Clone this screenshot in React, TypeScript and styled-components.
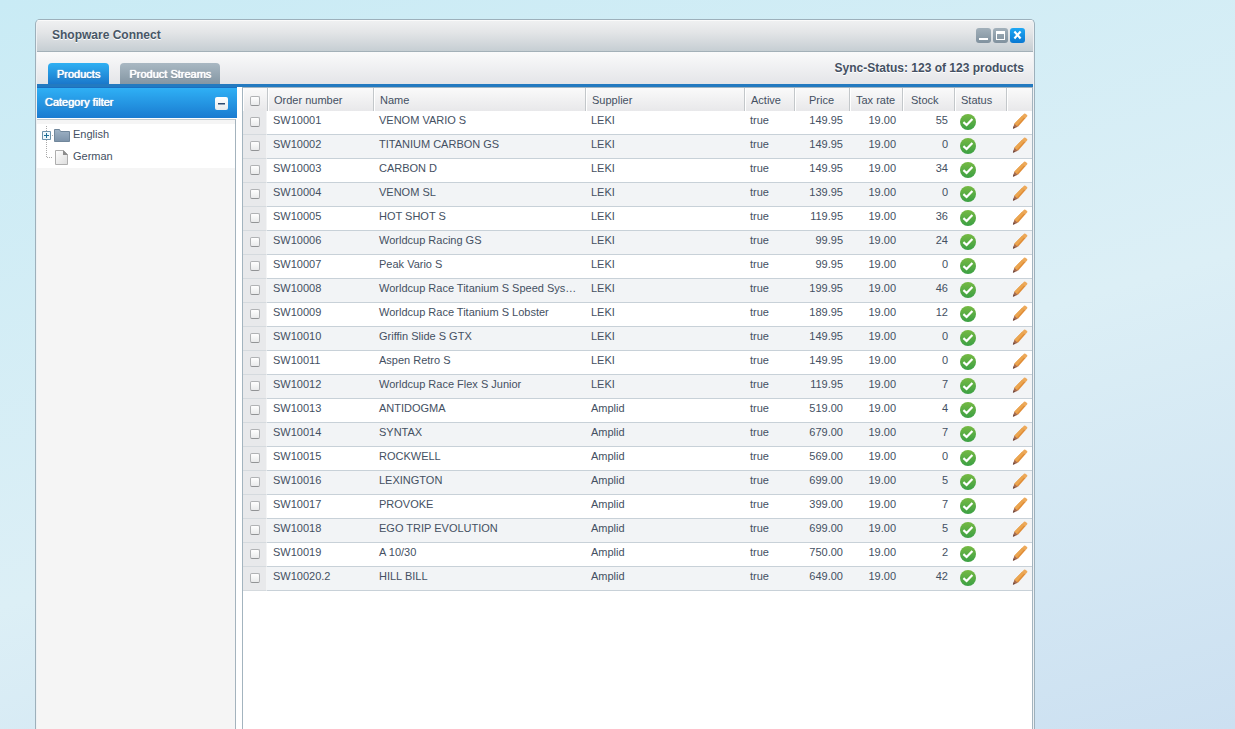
import React from "react";
import styled, { createGlobalStyle, css } from "styled-components";

const GlobalStyle = createGlobalStyle`
  *, *::before, *::after { box-sizing: border-box; }
  html { background: #d3e9f4; }
  body {
    margin: 0;
    font-family: "Liberation Sans", Arial, Helvetica, sans-serif;
    font-size: 11px;
    color: #445062;
  }
`;

const Desktop = styled.div`
  display: flex;
  min-height: 100vh;
  padding: 19px 200px 0 35px;
  background: linear-gradient(164deg, #c9ebf5 0%, #dceff6 56%, #cce0f1 100%);
`;

const Window = styled.main`
  flex: 1;
  min-width: 0;
  display: flex;
  flex-direction: column;
  padding: 0 1px;
  border: 1px solid #9db0bb;
  border-bottom: 0;
  border-radius: 5px 5px 0 0;
  background: #eef1f3;
  overflow: hidden;
`;

const TitleBar = styled.header`
  display: flex;
  align-items: center;
  justify-content: space-between;
  height: 32px;
  padding: 0 8px 0 15px;
  border-bottom: 1px solid #a3b0b8;
  background: linear-gradient(#f0f1f2, #e3e5e7 40%, #c6ced3);
  box-shadow: inset 0 1px #fafafa;
`;

const Title = styled.h1`
  margin: 0;
  padding-bottom: 2px;
  font-size: 12px;
  line-height: 16px;
  font-weight: bold;
  color: #475666;
  text-shadow: 0 1px #fff;
`;

const WindowTools = styled.div`
  display: flex;
  gap: 2px;
`;

const ToolButton = styled.button<{ $primary?: boolean }>`
  display: block;
  width: 15px;
  height: 15px;
  padding: 0;
  border: 0;
  border-radius: 3px;
  background: ${(p) =>
    p.$primary ? "linear-gradient(#1fa8f4, #0a78d2)" : "linear-gradient(#a2b0ba, #80919e)"};
  svg { display: block; }
`;

const Toolbar = styled.div`
  display: flex;
  justify-content: space-between;
  height: 35px;
  padding: 0 9px 0 11px;
  border-bottom: 3px solid #237ac0;
  background: linear-gradient(#fafafb, #e4e5e8);
`;

const Tabs = styled.nav`
  display: flex;
  align-items: flex-end;
  gap: 11px;
`;

const Tab = styled.button<{ $active?: boolean }>`
  height: 21px;
  padding: 1px 9px 0;
  border: 0;
  border-radius: 4px 4px 0 0;
  font: 11px/20px "Liberation Sans", Arial, sans-serif;
  color: #fff;
  white-space: nowrap;
  ${(p) =>
    p.$active
      ? css`
          background: linear-gradient(#2fb0f3, #1a78cb);
          text-shadow: 0 0 1px #fff, 0 0 1px #fff, 0 1px #145e9f;
        `
      : css`
          background: linear-gradient(#a9b8c3, #8496a3);
          text-shadow: 0 0 1px #fff, 0 0 1px #fff, 0 1px #6e808d;
        `}
`;

const SyncStatus = styled.p`
  margin: 8px 0 0;
  font-size: 12px;
  line-height: 16px;
  font-weight: bold;
  white-space: nowrap;
  text-shadow: 0 1px #fff;
`;

const Content = styled.div`
  flex: 1;
  display: flex;
  gap: 5px;
  min-width: 0;
  background: #fff;
`;

const Sidebar = styled.aside`
  flex: 0 0 200px;
  display: flex;
  flex-direction: column;
`;

const SidebarHeader = styled.div`
  display: flex;
  align-items: center;
  justify-content: space-between;
  height: 31px;
  padding: 0 9px 0 8px;
  border-top: 1px solid #1a6fc0;
  background: linear-gradient(#2fb0f5, #1a7bd0);
`;

const SidebarTitle = styled.h2`
  margin: 0;
  padding-bottom: 2px;
  font-size: 11px;
  line-height: 16px;
  font-weight: normal;
  color: #fff;
  text-shadow: 0 0 1px #fff, 0 0 1px #fff, 0 1px #1667ad;
`;

const CollapseButton = styled.button`
  display: flex;
  align-items: center;
  justify-content: center;
  width: 13px;
  height: 13px;
  padding: 0;
  border: 0;
  border-radius: 2px;
  background: linear-gradient(#fff, #e6ebee);
`;

const SidebarBody = styled.div`
  flex: 1;
  margin: 1px 1px 0 0;
  padding-top: 4px;
  border-top: 1px solid #c3cbd0;
  border-right: 1px solid #a4b3bd;
  background: #f5f5f5;
`;

const Tree = styled.ul`
  margin: 0;
  padding: 0;
  list-style: none;
  background: #fff;
`;

const TreeItem = styled.li`
  display: flex;
  align-items: center;
  height: 22px;
  padding-left: 4px;
  line-height: 20px;
  svg { flex: none; }
`;

const TreeLabel = styled.a`
  height: 22px;
  margin-left: 3px;
  color: inherit;
  text-decoration: none;
`;

const Grid = styled.section`
  flex: 1;
  min-width: 0;
  border: solid #a3b4bf;
  border-width: 1px 1px 0 1px;
`;

const Table = styled.table`
  width: 100%;
  table-layout: fixed;
  border-collapse: separate;
  border-spacing: 0;
`;

const Col = styled.col<{ $width?: number }>`
  ${(p) => p.$width && `width: ${p.$width}px;`}
`;

type Align = "left" | "right";

const HeadCell = styled.th`
  height: 23px;
  padding: 1px 6px 0;
  border-left: 1px solid #c3c7ca;
  background: linear-gradient(#fafafa, #e8e8ea);
  box-shadow: inset 1px 0 #fff;
  font-weight: normal;
  line-height: 16px;
  text-align: left;
  white-space: nowrap;
  &:first-child {
    padding: 3px 0 0 7px;
    border-left: 0;
  }
`;

const HeadLabel = styled.span<{ $indent?: number }>`
  padding-left: ${(p) => p.$indent || 0}px;
`;

const Row = styled.tr`
  background: #fff;
  &:nth-child(even) { background: #f2f4f6; }
`;

const Cell = styled.td<{ $align?: Align }>`
  height: 24px;
  padding: 1px 6px 6px;
  border-bottom: 1px solid #c8d1d8;
  line-height: 16px;
  vertical-align: top;
  text-align: ${(p) => p.$align || "left"};
  white-space: nowrap;
  overflow: hidden;
  text-overflow: ellipsis;
`;

const CheckCell = styled(Cell)`
  padding: 6px 0 0 7px;
  background: #e8e9eb;
  border-right: 1px solid #f3f4f5;
  border-bottom-color: #d5dade;
`;

const IconCell = styled(Cell)`
  padding: 2px 0 0 6px;
  svg { display: block; }
`;

const EditButton = styled.button`
  display: block;
  padding: 0;
  border: 0;
  background: none;
`;

const Check = styled.input.attrs({ type: "checkbox" })`
  appearance: none;
  display: block;
  width: 10px;
  height: 10px;
  margin: 0;
  border: 1px solid #b0b2b4;
  border-bottom-color: #929496;
  border-radius: 2px;
  background: linear-gradient(#fff, #e9eaeb);
`;

const MinimizeIcon = () => (
  <svg width="15" height="15" viewBox="0 0 15 15">
    <path d="M3 10h9v2H3z" fill="#fff" />
  </svg>
);

const MaximizeIcon = () => (
  <svg width="15" height="15" viewBox="0 0 15 15">
    <path fillRule="evenodd" d="M3 3h9v9H3zM4 6h7v5H4z" fill="#fff" />
  </svg>
);

const CloseIcon = () => (
  <svg width="15" height="15" viewBox="0 0 15 15">
    <path d="M4.4 3.6l6.2 6.8M10.6 3.6l-6.2 6.8" stroke="#fff" strokeWidth="2.2" />
  </svg>
);

const MinusIcon = () => (
  <svg width="9" height="9" viewBox="0 0 9 9">
    <path d="M1 4h7v1.5H1z" fill="#2b4a70" />
  </svg>
);

const BranchExpand = () => (
  <svg width="13" height="22" viewBox="0 0 13 22">
    <path d="M5.5 2v20M11 11.5h2" stroke="#aaa" strokeDasharray="1 1" fill="none" />
    <path d="M1.5 7.5h8v8h-8z" fill="#eef8fd" stroke="#6d93ad" />
    <path d="M3 11.5h5M5.5 9v5" stroke="#1f6f97" />
  </svg>
);

const BranchEnd = () => (
  <svg width="13" height="22" viewBox="0 0 13 22">
    <path d="M5.5 0v11.5H12" stroke="#aaa" strokeDasharray="1 1" fill="none" />
  </svg>
);

const FolderIcon = () => (
  <svg width="16" height="14" viewBox="0 0 16 14">
    <defs>
      <linearGradient id="folder" x1="0" y1="0" x2="0" y2="1">
        <stop offset="0" stopColor="#9fb3c6" />
        <stop offset="1" stopColor="#7d93a9" />
      </linearGradient>
    </defs>
    <path d="M.5 1.5h5l1 2h9v10H.5z" fill="url(#folder)" stroke="#71879b" />
  </svg>
);

const FileIcon = () => (
  <svg width="16" height="17" viewBox="0 0 16 17">
    <defs>
      <linearGradient id="file" x1="0" y1="0" x2="1" y2="1">
        <stop offset="0" stopColor="#fff" />
        <stop offset="1" stopColor="#dcdcdc" />
      </linearGradient>
    </defs>
    <path d="M1.5 1.5h8l4 4v10h-12z" fill="url(#file)" stroke="#aeaeae" />
    <path d="M9 1l5 5H9z" fill="#8c8c8c" />
  </svg>
);

const StatusIcon = () => (
  <svg width="16" height="18" viewBox="0 0 16 18" role="img" aria-label="Synced">
    <defs>
      <linearGradient id="ok" x1="0" y1="0" x2="0" y2="1">
        <stop offset="0" stopColor="#76b943" />
        <stop offset="1" stopColor="#3ba044" />
      </linearGradient>
    </defs>
    <circle cx="8" cy="9" r="8" fill="url(#ok)" />
    <path d="M3.4 9.2l3.2 2.8 5.8-6" stroke="#fff" strokeWidth="2.2" fill="none" />
  </svg>
);

const PencilIcon = () => (
  <svg width="16" height="17" viewBox="0 0 16 17">
    <path d="M10.4 2.4L12 .7q.7-.6 1.4 0l1.7 1.4q.6.6 0 1.3l-1.8 2z" fill="#edaa5c" />
    <path d="M10.4 2.4l3 2.9-7.4 8.5-3.7-3z" fill="#e08c36" />
    <path d="M10.4 2.4l2 1.9-7.7 8.5-2.4-2z" fill="#eba54f" />
    <path d="M2.3 10.8L6 13.8.9 15.8z" fill="#a86b4b" />
    <path d="M1.5 13.2l2 1.6-2.6 1z" fill="#6b4740" />
  </svg>
);

const columns: { label: string; width?: number; indent?: number }[] = [
  { label: "Order number", width: 106 },
  { label: "Name" },
  { label: "Supplier", width: 159 },
  { label: "Active", width: 50 },
  { label: "Price", width: 55, indent: 8 },
  { label: "Tax rate", width: 53 },
  { label: "Stock", width: 52, indent: 2 },
  { label: "Status", width: 52 },
  { label: "", width: 26 },
];

const products: [string, string, string, string, number][] = [
  ["SW10001", "VENOM VARIO S", "LEKI", "149.95", 55],
  ["SW10002", "TITANIUM CARBON GS", "LEKI", "149.95", 0],
  ["SW10003", "CARBON D", "LEKI", "149.95", 34],
  ["SW10004", "VENOM SL", "LEKI", "139.95", 0],
  ["SW10005", "HOT SHOT S", "LEKI", "119.95", 36],
  ["SW10006", "Worldcup Racing GS", "LEKI", "99.95", 24],
  ["SW10007", "Peak Vario S", "LEKI", "99.95", 0],
  ["SW10008", "Worldcup Race Titanium S Speed System", "LEKI", "199.95", 46],
  ["SW10009", "Worldcup Race Titanium S Lobster", "LEKI", "189.95", 12],
  ["SW10010", "Griffin Slide S GTX", "LEKI", "149.95", 0],
  ["SW10011", "Aspen Retro S", "LEKI", "149.95", 0],
  ["SW10012", "Worldcup Race Flex S Junior", "LEKI", "119.95", 7],
  ["SW10013", "ANTIDOGMA", "Amplid", "519.00", 4],
  ["SW10014", "SYNTAX", "Amplid", "679.00", 7],
  ["SW10015", "ROCKWELL", "Amplid", "569.00", 0],
  ["SW10016", "LEXINGTON", "Amplid", "699.00", 5],
  ["SW10017", "PROVOKE", "Amplid", "399.00", 7],
  ["SW10018", "EGO TRIP EVOLUTION", "Amplid", "699.00", 5],
  ["SW10019", "A 10/30", "Amplid", "750.00", 2],
  ["SW10020.2", "HILL BILL", "Amplid", "649.00", 42],
];

export default function App() {
  return (
    <>
      <GlobalStyle />
      <Desktop>
        <Window>
          <TitleBar>
            <Title>Shopware Connect</Title>
            <WindowTools>
              <ToolButton aria-label="Minimize"><MinimizeIcon /></ToolButton>
              <ToolButton aria-label="Maximize"><MaximizeIcon /></ToolButton>
              <ToolButton aria-label="Close" $primary><CloseIcon /></ToolButton>
            </WindowTools>
          </TitleBar>
          <Toolbar>
            <Tabs>
              <Tab $active>Products</Tab>
              <Tab>Product Streams</Tab>
            </Tabs>
            <SyncStatus>Sync-Status: 123 of 123 products</SyncStatus>
          </Toolbar>
          <Content>
            <Sidebar>
              <SidebarHeader>
                <SidebarTitle>Category filter</SidebarTitle>
                <CollapseButton aria-label="Collapse"><MinusIcon /></CollapseButton>
              </SidebarHeader>
              <SidebarBody>
                <Tree>
                  <TreeItem>
                    <BranchExpand />
                    <FolderIcon />
                    <TreeLabel href="#english">English</TreeLabel>
                  </TreeItem>
                  <TreeItem>
                    <BranchEnd />
                    <FileIcon />
                    <TreeLabel href="#german">German</TreeLabel>
                  </TreeItem>
                </Tree>
              </SidebarBody>
            </Sidebar>
            <Grid>
              <Table>
                <colgroup>
                  <Col $width={24} />
                  {columns.map((c, i) => <Col key={i} $width={c.width} />)}
                </colgroup>
                <thead>
                  <tr>
                    <HeadCell><Check aria-label="Select all products" /></HeadCell>
                    {columns.map((c, i) => (
                      <HeadCell key={i}>
                        <HeadLabel $indent={c.indent}>{c.label}</HeadLabel>
                      </HeadCell>
                    ))}
                  </tr>
                </thead>
                <tbody>
                  {products.map(([order, name, supplier, price, stock]) => (
                    <Row key={order}>
                      <CheckCell><Check aria-label={`Select ${order}`} /></CheckCell>
                      <Cell>{order}</Cell>
                      <Cell>{name}</Cell>
                      <Cell>{supplier}</Cell>
                      <Cell>true</Cell>
                      <Cell $align="right">{price}</Cell>
                      <Cell $align="right">19.00</Cell>
                      <Cell $align="right">{stock}</Cell>
                      <IconCell><StatusIcon /></IconCell>
                      <IconCell>
                        <EditButton aria-label={`Edit ${order}`}><PencilIcon /></EditButton>
                      </IconCell>
                    </Row>
                  ))}
                </tbody>
              </Table>
            </Grid>
          </Content>
        </Window>
      </Desktop>
    </>
  );
}
